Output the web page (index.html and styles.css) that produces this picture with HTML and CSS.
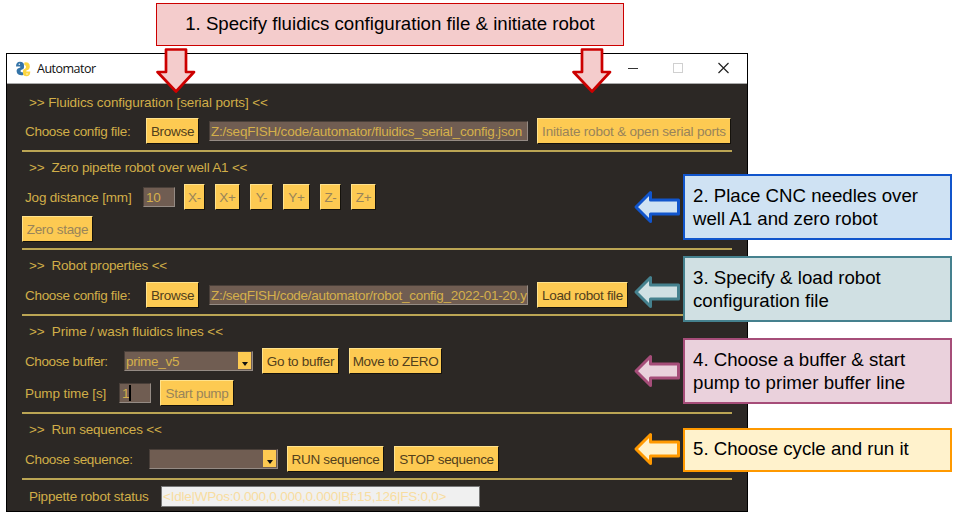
FILE: index.html
```html
<!DOCTYPE html>
<html lang="en">
<head>
<meta charset="utf-8">
<title>Automator</title>
<link rel="stylesheet" href="styles.css">
</head>
<body>
<main class="stage">
  <div class="window">
    <header class="titlebar">
      <svg class="logo" viewBox="0 0 16 16"><path d="M1.500 5.500Q1 1 5 1Q8.500 1 8.500 4.500Q8.500 7 6 8.500Q4 9.500 4.500 11" fill="none"/><path class="blue" d="M1 5.500Q1 .8 5 .8Q9 .8 9 4.500V6.500Q9 8.500 6.500 8.800Q5.500 9 5.500 10.500Q6.500 11.500 8.500 11.500V14Q4 15 2.300 12.500Q.8 9.500 2.500 7.800Q4 6.800 5.300 6.500V5.500Z"/><path class="yellow" d="M15.300 10.500Q15.300 15.200 11.500 15.200Q8 15.200 8 12V9.800Q8 8.200 10 7.800Q11 7.300 11 5.500Q10.800 4.300 9.300 4V1.500Q13.500 .8 14.500 3.500Q15.500 6.500 14 8.300Q12.800 9.300 11.300 9.600V10.500Z"/><circle cx="4.300" cy="3.200" r=".7" fill="#fff"/><circle cx="12" cy="13" r=".7" fill="#fff"/></svg>
      <span class="title">Automator</span>
      <svg class="controls" viewBox="0 0 104 16"><path d="M1 7.500H11" stroke="#333" fill="none"/><rect x="46.500" y="2.500" width="9" height="9" stroke="#d0d0d0" fill="none"/><path d="M91.500 2L101.500 12M101.500 2L91.500 12" stroke="#222" stroke-width="1.200" fill="none"/></svg>
    </header>
    <div class="content">
      <section class="first">
        <h2 class="loose">&gt;&gt; Fluidics configuration [serial ports] &lt;&lt;</h2>
        <div class="row"><label class="w-config">Choose config file:</label><button class="b-browse">Browse</button><div class="field long"><span class="t-path">Z:/seqFISH/code/automator/fluidics_serial_config.json</span></div><button class="b-init off">Initiate robot &amp; open serial ports</button></div>
      </section>
      <section>
        <h2>&gt;&gt;&nbsp; Zero pipette robot over well A1 &lt;&lt;</h2>
        <div class="row"><label class="w-jog">Jog distance [mm]</label><div class="field short">10</div><button class="b-xm off">X-</button><button class="b-xp off">X+</button><button class="b-ym off">Y-</button><button class="b-yp off">Y+</button><button class="b-xm off">Z-</button><button class="b-xp off">Z+</button></div>
        <div class="row"><button class="b-zero off">Zero stage</button></div>
      </section>
      <section>
        <h2>&gt;&gt;&nbsp; Robot properties &lt;&lt;</h2>
        <div class="row"><label class="w-config">Choose config file:</label><button class="b-browse">Browse</button><div class="field long"><span>Z:/seqFISH/code/automator/robot_config_2022-01-20.y</span></div><button class="b-load">Load robot file</button></div>
      </section>
      <section>
        <h2 class="loose">&gt;&gt;&nbsp; Prime / wash fluidics lines &lt;&lt;</h2>
        <div class="row"><label class="w-buffer">Choose buffer:</label><div class="field combo"><span>prime_v5</span><i class="drop"></i></div><button class="b-go">Go to buffer</button><button class="b-move">Move to ZERO</button></div>
        <div class="row"><label class="w-pump">Pump time [s]</label><div class="field short caret">1</div><button class="b-start off">Start pump</button></div>
      </section>
      <section>
        <h2>&gt;&gt;&nbsp; Run sequences &lt;&lt;</h2>
        <div class="row"><label class="w-seq">Choose sequence:</label><div class="field combo"><span></span><i class="drop"></i></div><button class="b-run">RUN sequence</button><button class="b-stop">STOP sequence</button></div>
      </section>
      <div class="row status"><label class="w-status">Pippette robot status</label><div class="field output"><span class="t-out">&lt;Idle|WPos:0.000,0.000,0.000|Bf:15,126|FS:0,0&gt;</span></div></div>
    </div>
  </div>

  <div class="note n1">1. Specify fluidics configuration file &amp; initiate robot</div>
  <div class="note n2">2. Place CNC needles over<br>well A1 and zero robot</div>
  <div class="note n3">3. Specify &amp; load robot<br>configuration file</div>
  <div class="note n4">4. Choose a buffer &amp; start<br>pump to primer buffer line</div>
  <div class="note n5">5. Choose cycle and run it</div>

  <svg class="down d1" viewBox="0 0 42 47"><path d="M11 2.500H31V25H39L21 44.500L2.500 25H11Z"/></svg>
  <svg class="down d2" viewBox="0 0 42 47"><path d="M11 2.500H31V25H39L21 44.500L2.500 25H11Z"/></svg>
  <svg class="left l2" viewBox="0 0 48 34"><path d="M3 17L17.500 2.500V10H45.500V24H17.500V31.500Z"/></svg>
  <svg class="left l3" viewBox="0 0 48 34"><path d="M3 17L17.500 2.500V10H45.500V24H17.500V31.500Z"/></svg>
  <svg class="left l4" viewBox="0 0 48 34"><path d="M3 17L17.500 2.500V10H45.500V24H17.500V31.500Z"/></svg>
  <svg class="left l5" viewBox="0 0 48 34"><path d="M3 17L17.500 2.500V10H45.500V24H17.500V31.500Z"/></svg>
</main>
</body>
</html>
```
FILE: styles.css
```css
* { box-sizing: border-box; }
body { margin: 0; background: #fff; overflow: hidden; }
.stage {
  position: relative;
  width: 957px;
  height: 519px;
  padding: 53px 0 0 6px;
  font-family: "Liberation Sans", Arial, sans-serif;
}
.window {
  width: 742px;
  height: 459px;
  border: 1px solid #000;
  background: #2c2825;
  color: #d1ae48;
  font-size: 13.5px;
  letter-spacing: -0.3px;
}
.titlebar {
  display: flex;
  align-items: center;
  height: 30px;
  padding: 0 16px 0 8px;
  background: #fff;
  border-bottom: 1px solid #aaa;
  color: #111;
}
.logo { width: 16px; height: 16px; margin-right: 6px; }
.blue { fill: #3474a8; }
.yellow { fill: #fbd540; }
.title { font: 12.5px "Open Sans", sans-serif; letter-spacing: -0.5px; flex: 1; }
.controls { width: 104px; height: 16px; }
.content { padding: 10px 15px 0; }
section { padding-top: 7px; border-bottom: 2px solid #bba554; }
section.first { padding-top: 0; }
h2 {
  margin: 0 0 7px;
  padding-left: 7px;
  font-size: inherit;
  font-weight: normal;
  line-height: 18px;
  height: 18px;
  letter-spacing: -0.2px;
  white-space: pre;
}
h2.loose { letter-spacing: -0.1px; }
.first h2 { margin-bottom: 6px; }
.row { display: flex; align-items: center; height: 26px; margin-bottom: 6px; white-space: nowrap; }
label { padding-left: 3px; flex: none; }
button {
  flex: none;
  height: 26px;
  margin: 0 10px 0 0;
  padding: 0;
  border: 1px solid;
  border-color: #ffe28c #15120c #15120c #ffe28c;
  background: #fdca52;
  color: #52401c;
  font: inherit;
  letter-spacing: inherit;
  text-align: center;
}
button.off { color: #98845a; }
.field {
  flex: none;
  height: 20px;
  margin-right: 9px;
  padding-left: 1px;
  border: 1px solid;
  border-color: #493f39 #958b84 #958b84 #493f39;
  background: #705d52;
  color: #d5b04b;
  line-height: 19px;
}
.long { width: 319px; }
.short { width: 32px; padding-left: 2px; }
.caret::after { content: ""; display: inline-block; width: 1.5px; height: 16px; background: #000; vertical-align: -3px; }
.combo { display: flex; justify-content: space-between; width: 129px; padding-right: 1px; }
.drop { width: 13px; height: 17px; background: #fdca52; display: flex; align-items: flex-end; justify-content: center; padding-bottom: 3px; }
.drop::after { content: ""; border: 3.5px solid transparent; border-top: 4px solid #111; border-bottom: 0; }
.output { width: 319px; height: 21px; background: #f0f0f0; color: #f8dda0; border-color: #777; line-height: 19px; }
.status { margin: 3px 0 0; }
.t-path { letter-spacing: -0.22px; }
.t-out { letter-spacing: -0.24px; }

.w-config { width: 124px; }
.w-jog { width: 121px; letter-spacing: -0.18px; }
.w-buffer { width: 102px; letter-spacing: -0.4px; }
.w-pump { width: 97px; letter-spacing: -0.1px; }
.w-seq { width: 127px; }
.w-status { width: 139px; padding-left: 7px; letter-spacing: -0.2px; }
.b-browse { width: 53px; }
.b-init { width: 194px; letter-spacing: -0.2px; }
.b-xm { width: 21px; }
.b-xp { width: 25px; }
.b-ym { width: 23px; }
.b-yp { width: 27px; }
.b-zero { width: 71px; }
.b-load { width: 91px; }
.b-go { width: 77px; }
.b-move { width: 93px; }
.b-start { width: 74px; }
.b-run { width: 97px; }
.b-stop { width: 105px; }

.note {
  position: absolute;
  left: 683px;
  width: 269px;
  height: 66px;
  padding: 9px 0 0 8px;
  border: 2px solid;
  color: #000;
  font-size: 18.67px;
  line-height: 22.5px;
  white-space: nowrap;
}
.n1 { left: 156px; top: 3px; width: 468px; height: 43px; padding: 9px 0 0; border: 1px solid #c00; background: #f4cccc; text-align: center; }
.n2 { top: 174px; border-color: #1155cc; background: #cfe2f3; }
.n3 { top: 256px; border-color: #45818e; background: #d0e0e3; }
.n4 { top: 338px; border-color: #a64d79; background: #ead1dc; }
.n5 { top: 428px; height: 44px; padding-top: 8px; border-color: #ff9900; background: #fff2cc; }
.down { position: absolute; top: 47px; width: 42px; height: 47px; fill: #f4cccc; stroke: #c00; stroke-width: 2.7; stroke-linejoin: round; }
.d1 { left: 155px; }
.d2 { left: 571px; }
.left { position: absolute; left: 633px; width: 48px; height: 34px; stroke-width: 3; stroke-linejoin: round; }
.l2 { top: 189.5px; fill: #cfe2f3; stroke: #1155cc; }
.l3 { top: 275px; fill: #d0e0e3; stroke: #45818e; }
.l4 { top: 353.5px; fill: #ead1dc; stroke: #a64d79; }
.l5 { top: 432px; fill: #fff2cc; stroke: #ff9900; }
```
